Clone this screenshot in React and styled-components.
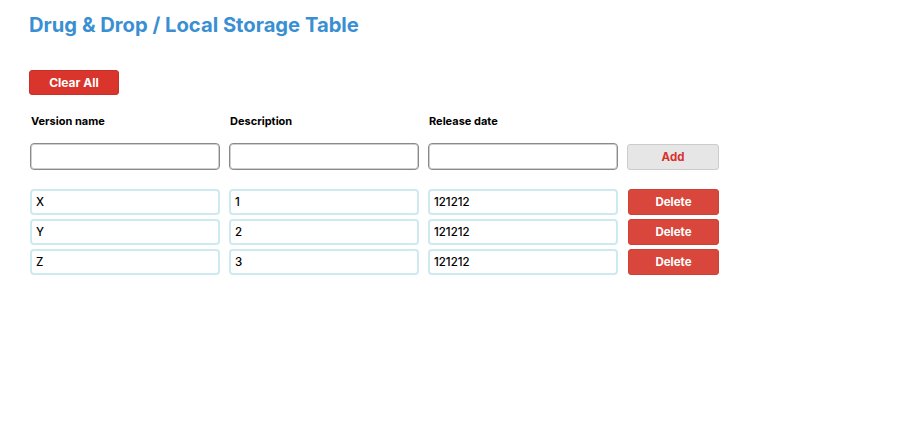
import React, { useState } from "react";
import styled, { createGlobalStyle } from "styled-components";

const GlobalStyle = createGlobalStyle`
  body {
    margin: 0;
    background: #ffffff;
    font-family: Inter, "Liberation Sans", sans-serif;
    color: #000;
  }
`;

const initialRows = [
  { name: "X", description: "1", date: "121212" },
  { name: "Y", description: "2", date: "121212" },
  { name: "Z", description: "3", date: "121212" },
];

export default function App() {
  const [rows, setrows] = useState(initialRows);
  const [name, setname] = useState("");
  const [description, setdescription] = useState("");
  const [date, setdate] = useState("");

  const addRow = () => {
    setrows([...rows, { name, description, date }]);
    setname("");
    setdescription("");
    setdate("");
  };

  return (
    <Wrapper>
      <GlobalStyle />
      <Title>Drug &amp; Drop / Local Storage Table</Title>
      <ClearButton onClick={() => setrows([])}>Clear All</ClearButton>
      <Grid>
        <Header>Version name</Header>
        <Header>Description</Header>
        <Header>Release date</Header>
        <span />
      </Grid>
      <Grid>
        <Field value={name} onChange={(e) => setname(e.target.value)} />
        <Field
          value={description}
          onChange={(e) => setdescription(e.target.value)}
        />
        <Field value={date} onChange={(e) => setdate(e.target.value)} />
        <AddButton onClick={addRow}>Add</AddButton>
      </Grid>
      <List>
        {rows.map((row, i) => (
          <Grid key={i}>
            <Field $filled defaultValue={row.name} />
            <Field $filled defaultValue={row.description} />
            <Field $filled defaultValue={row.date} />
            <DeleteButton
              onClick={() => setrows(rows.filter((_, idx) => idx !== i))}
            >
              Delete
            </DeleteButton>
          </Grid>
        ))}
      </List>
    </Wrapper>
  );
}

const Wrapper = styled.div`
  padding: 12px 0 0 29px;
`;

const Title = styled.h1`
  margin: 0;
  font-size: 20.2px;
  font-weight: 700;
  color: #3a8fd3;
  line-height: 26px;
`;

const ClearButton = styled.button`
  display: block;
  margin-top: 32px;
  width: 90px;
  height: 25px;
  background: #d9352c;
  border: 1px solid #c8302a;
  border-radius: 3px;
  color: #fff;
  font-family: inherit;
  font-size: 12px;
  font-weight: 700;
  cursor: pointer;
`;

const Grid = styled.div`
  display: grid;
  grid-template-columns: 190px 190px 190px 92px;
  column-gap: 9px;
  align-items: center;
  margin-left: 1px;
`;

const Header = styled.div`
  font-size: 11px;
  font-weight: 700;
  padding: 19px 0 15px 1px;
  line-height: 14px;
`;

const Field = styled.input`
  box-sizing: border-box;
  width: 100%;
  height: ${(p) => (p.$filled ? "26px" : "27px")};
  padding: 0 4px;
  border: ${(p) => (p.$filled ? "2px solid #cdeaf1" : "1px solid #8a8a8a")};
  border-radius: 4px;
  font-family: inherit;
  font-size: 11.5px;
  font-weight: 500;
  color: #000;
  outline: none;
  box-shadow: ${(p) => (p.$filled ? "none" : "inset 0 0 0 1px #cfcfcf")};
`;

const AddButton = styled.button`
  width: 92px;
  height: 26px;
  background: #e6e6e6;
  border: 1px solid #cccccc;
  border-radius: 3px;
  color: #d9302c;
  font-family: inherit;
  font-size: 11.5px;
  font-weight: 700;
  cursor: pointer;
`;

const List = styled.div`
  display: flex;
  flex-direction: column;
  gap: 4px;
  margin-top: 19px;
`;

const DeleteButton = styled.button`
  width: 91px;
  height: 26px;
  margin-left: 1px;
  background: #d9473c;
  border: 1px solid #cf4036;
  border-radius: 3px;
  color: #fff;
  font-family: inherit;
  font-size: 11.5px;
  font-weight: 700;
  cursor: pointer;
`;
